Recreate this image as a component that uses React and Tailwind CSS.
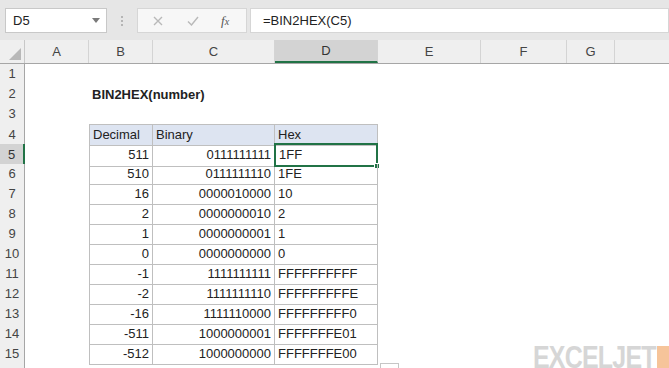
const COLS = [
  { id: "A", w: 64 },
  { id: "B", w: 64 },
  { id: "C", w: 122 },
  { id: "D", w: 103 },
  { id: "E", w: 103 },
  { id: "F", w: 86 },
  { id: "G", w: 48 },
];

const DATA = [
  [511, "0111111111", "1FF"],
  [510, "0111111110", "1FE"],
  [16, "0000010000", "10"],
  [2, "0000000010", "2"],
  [1, "0000000001", "1"],
  [0, "0000000000", "0"],
  [-1, "1111111111", "FFFFFFFFFF"],
  [-2, "1111111110", "FFFFFFFFFE"],
  [-16, "1111110000", "FFFFFFFFF0"],
  [-511, "1000000001", "FFFFFFFE01"],
  [-512, "1000000000", "FFFFFFFE00"],
];

const GRID = "grid grid-cols-[25px_64px_64px_122px_103px_103px_86px_48px_1fr]";

function RowHead({ n, label = true }) {
  const active = n === 5;
  return (
    <div
      className={
        "flex items-center justify-center text-[13px] border-b border-[#dadada] " +
        (active
          ? "bg-[#d3d3d3] text-[#333] border-r-2 border-r-[#217346]"
          : "bg-[#efefef] text-[#444] border-r border-r-[#a6a6a6]")
      }
    >
      {label ? n : null}
    </div>
  );
}

function Row({ n, label, children }) {
  return (
    <div className={GRID + " h-[20px]"}>
      <RowHead n={n} label={label} />
      {children}
    </div>
  );
}

function Blank() {
  return <div />;
}

export default function App() {
  return (
    <div
      className="relative w-[669px] h-[368px] overflow-hidden bg-white text-[#222]"
      style={{ fontFamily: '"Liberation Sans", Arial, sans-serif' }}
    >
      {/* formula bar */}
      <div className="h-[40px] bg-[#e6e6e6] flex items-start pt-[8px]">
        <div className="ml-[5px] w-[102px] h-[25px] bg-white border border-[#c8c8c8] flex items-center justify-between pl-[7px] pr-[6px] text-[13px]">
          <span>D5</span>
          <svg width="8" height="5" viewBox="0 0 8 5">
            <path d="M0 0h8L4 5z" fill="#7a7a7a" />
          </svg>
        </div>
        <div className="w-[30px] h-[25px] flex flex-col items-center justify-center gap-[2px]">
          <span className="w-[2px] h-[2px] bg-[#b5b5b5]" />
          <span className="w-[2px] h-[2px] bg-[#b5b5b5]" />
          <span className="w-[2px] h-[2px] bg-[#b5b5b5]" />
        </div>
        <div className="w-[110px] h-[25px] bg-[#f7f7f7] border border-[#d6d6d6] flex items-center">
          <svg className="ml-[15px]" width="10" height="10" viewBox="0 0 10 10">
            <path d="M1 1l8 8M9 1l-8 8" stroke="#b9b9b9" strokeWidth="1.4" />
          </svg>
          <svg className="ml-[24px]" width="12" height="10" viewBox="0 0 12 10">
            <path d="M1 5.5l3.5 3.5L11 1" stroke="#b9b9b9" strokeWidth="1.4" fill="none" />
          </svg>
          <span
            className="ml-[22px] text-[13px] italic text-[#555]"
            style={{ fontFamily: '"Liberation Serif", serif' }}
          >
            f<span className="text-[10px]">x</span>
          </span>
        </div>
        <div className="ml-[3px] flex-1 h-[25px] bg-white border border-[#d6d6d6] flex items-center pl-[12px] text-[13px]">
          =BIN2HEX(C5)
        </div>
      </div>

      {/* column headers */}
      <div className={GRID + " h-[24px] bg-[#efefef] border-b border-[#a6a6a6]"}>
        <div className="relative border-r border-[#c8c8c8]">
          <svg className="absolute right-[3px] bottom-[3px]" width="12" height="12" viewBox="0 0 12 12">
            <path d="M12 0v12H0z" fill="#b8b8b8" />
          </svg>
        </div>
        {COLS.map((c) => (
          <div
            key={c.id}
            className={
              "flex items-center justify-center text-[13px] border-r border-[#d4d4d4] " +
              (c.id === "D"
                ? "bg-[#d3d3d3] text-[#333] border-b-2 border-b-[#217346]"
                : "text-[#444]")
            }
          >
            {c.id}
          </div>
        ))}
        <div />
      </div>

      {/* sheet */}
      <Row n={1} />
      <Row n={2}>
        <Blank />
        <div className="col-span-2 flex items-center pl-[3px] text-[13px] font-bold whitespace-nowrap">
          BIN2HEX(number)
        </div>
      </Row>
      <Row n={3} />
      <Row n={4}>
        <Blank />
        <div className="flex items-center pl-[3px] text-[13px] bg-[#dde4f1] border border-[#bfbfbf]">
          Decimal
        </div>
        <div className="flex items-center pl-[3px] text-[13px] bg-[#dde4f1] border-y border-r border-[#bfbfbf]">
          Binary
        </div>
        <div className="flex items-center pl-[3px] text-[13px] bg-[#dde4f1] border-y border-r border-[#bfbfbf]">
          Hex
        </div>
      </Row>
      {DATA.map(([dec, bin, hex], i) => (
        <Row key={i} n={i + 5}>
          <Blank />
          <div className="flex items-center justify-end pr-[3px] text-[13px] border-x border-b border-[#bfbfbf]">
            {dec}
          </div>
          <div className="flex items-center justify-end pr-[3px] text-[13px] border-r border-b border-[#bfbfbf]">
            {bin}
          </div>
          <div
            className={
              "relative flex items-center pl-[3px] text-[13px] " +
              (i === 0
                ? "border-2 border-[#217346] -mt-[1px] -ml-[1px] pl-[2px]"
                : "border-r border-b border-[#bfbfbf]")
            }
          >
            {hex}
            {i === 0 && (
              <span className="absolute -right-[4px] -bottom-[4px] w-[6px] h-[6px] bg-[#217346] border border-white" />
            )}
          </div>
        </Row>
      ))}
      <Row n={16} label={false} />

      {/* small option box below table */}
      <div className="absolute left-[380px] top-[363px] w-[19px] h-[8px] bg-white border border-[#c6c6c6]" />

      {/* watermark */}
      <div className="absolute left-[533px] top-[341px] flex items-start">
        <span className="text-[32px] leading-none font-bold text-[#d6d6d6] tracking-[-1px] origin-left scale-x-[0.78] inline-block">
          EXCELJET
        </span>
      </div>
      <div className="absolute left-[657px] top-[346px] w-[14px] h-[24px] bg-[#f6c49a]" />
    </div>
  );
}
